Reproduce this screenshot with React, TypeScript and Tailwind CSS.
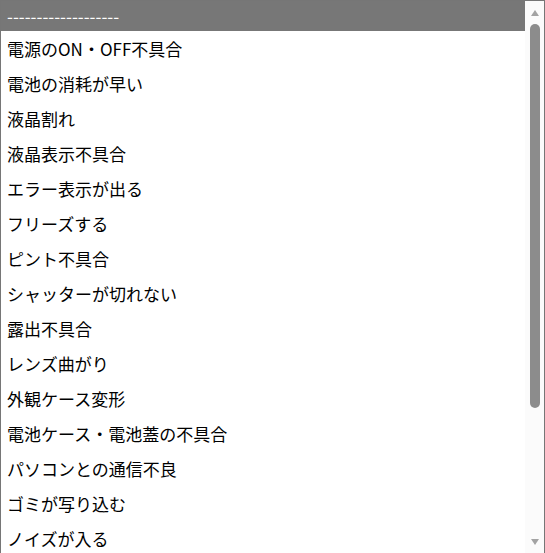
const OPTIONS = [
  '電源のON・OFF不具合',
  '電池の消耗が早い',
  '液晶割れ',
  '液晶表示不具合',
  'エラー表示が出る',
  'フリーズする',
  'ピント不具合',
  'シャッターが切れない',
  '露出不具合',
  'レンズ曲がり',
  '外観ケース変形',
  '電池ケース・電池蓋の不具合',
  'パソコンとの通信不良',
  'ゴミが写り込む',
  'ノイズが入る',
]

function Arrow({ up }: { up?: boolean }) {
  return (
    <svg width="8" height="6" viewBox="0 0 8 6" className="fill-[#a3a3a3]">
      {up ? <path d="M4 0 L8 6 L0 6 Z" /> : <path d="M0 0 L8 0 L4 6 Z" />}
    </svg>
  )
}

export default function App() {
  return (
    <div
      className="flex h-[553px] w-[545px] overflow-hidden border-x border-t border-[#767676] bg-white text-[17px] text-black"
      style={{ fontFamily: '"Noto Sans CJK JP", "Noto Sans", sans-serif' }}
    >
      <div className="min-w-0 flex-1">
        <div className="flex h-[30px] items-center bg-[#777777] px-[6px] text-white">
          -------------------
        </div>
        {OPTIONS.map(o => (
          <div key={o} className="flex h-[35px] items-center px-[6px] whitespace-nowrap">
            {o}
          </div>
        ))}
      </div>

      {/* scrollbar */}
      <div className="flex w-[19px] shrink-0 flex-col items-center bg-[#fbfbfb] pt-[9px]">
        <Arrow up />
        <div className="mt-[8px] h-[384px] w-[10px] rounded-full bg-[#8c8c8c]" />
        <div className="mt-auto mb-[8px]">
          <Arrow />
        </div>
      </div>
    </div>
  )
}
